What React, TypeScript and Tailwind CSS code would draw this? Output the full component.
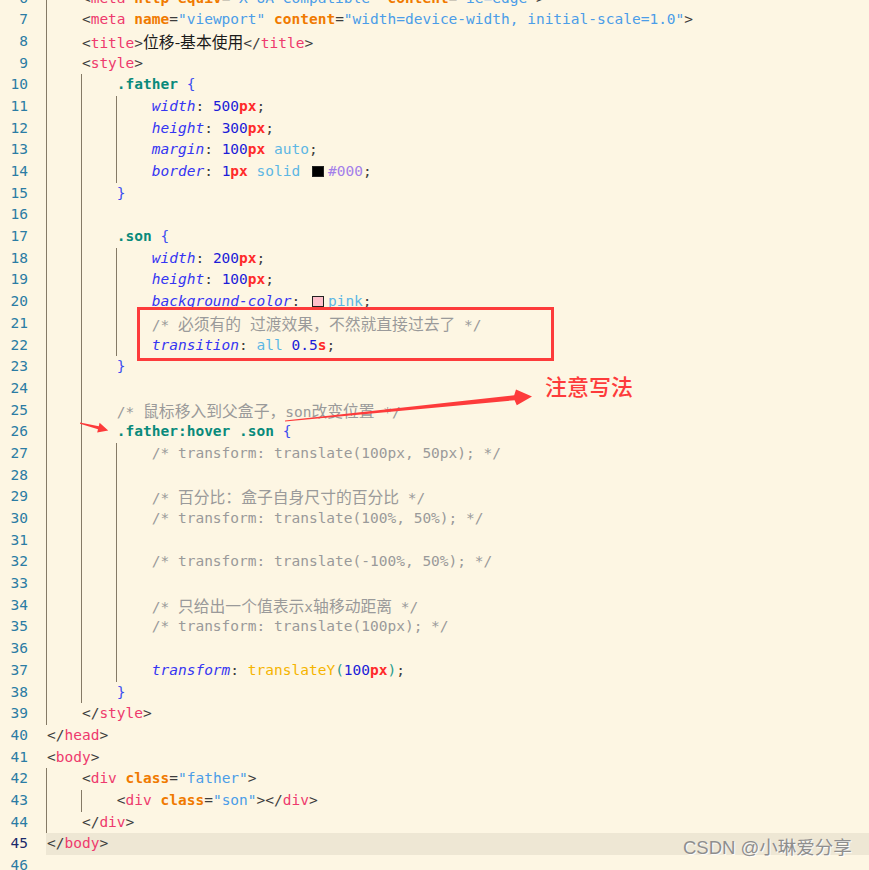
import React from "react";

type Tok = [string, string];

// token colours, roughly the HBuilderX "green" theme
const C: Record<string, string> = {
  p: "text-[#3d3d3d]",
  t: "text-[#ee3a6d]",
  a: "text-[#f07a00] font-bold",
  s: "text-[#4b9de8]",
  x: "text-[#1a1a1a] font-['Noto_Sans_CJK_SC',sans-serif] text-[15.8px]",
  sel: "text-[#098a7b] font-bold",
  b: "text-[#3d4ff0]",
  pr: "text-[#3535f2] italic",
  n: "text-[#1c1cd8]",
  u: "text-[#ff2b2b] font-bold",
  k: "text-[#5db7e4]",
  h: "text-[#a47fea]",
  c: "text-[#9a9a9a]",
  f: "text-[#f5b400]",
  pa: "text-[#2a9d8f]",
};

const I4 = "    ";
const I8 = "        ";
const I12 = "            ";

// each entry: line number, indent guide columns, tokens
const lines: { no: number; guides: number[]; toks: Tok[] }[] = [
  { no: 6, guides: [0], toks: [["p", I4 + "<"], ["t", "meta"], ["p", " "], ["a", "http-equiv"], ["p", "="], ["s", '"X-UA-Compatible"'], ["p", " "], ["a", "content"], ["p", "="], ["s", '"ie=edge"'], ["p", ">"]] },
  { no: 7, guides: [0], toks: [["p", I4 + "<"], ["t", "meta"], ["p", " "], ["a", "name"], ["p", "="], ["s", '"viewport"'], ["p", " "], ["a", "content"], ["p", "="], ["s", '"width=device-width, initial-scale=1.0"'], ["p", ">"]] },
  { no: 8, guides: [0], toks: [["p", I4 + "<"], ["t", "title"], ["p", ">"], ["x", "位移-基本使用"], ["p", "</"], ["t", "title"], ["p", ">"]] },
  { no: 9, guides: [0], toks: [["p", I4 + "<"], ["t", "style"], ["p", ">"]] },
  { no: 10, guides: [0, 4], toks: [["p", I8], ["sel", ".father"], ["p", " "], ["b", "{"]] },
  { no: 11, guides: [0, 4, 8], toks: [["p", I12], ["pr", "width"], ["p", ": "], ["n", "500"], ["u", "px"], ["p", ";"]] },
  { no: 12, guides: [0, 4, 8], toks: [["p", I12], ["pr", "height"], ["p", ": "], ["n", "300"], ["u", "px"], ["p", ";"]] },
  { no: 13, guides: [0, 4, 8], toks: [["p", I12], ["pr", "margin"], ["p", ": "], ["n", "100"], ["u", "px"], ["p", " "], ["k", "auto"], ["p", ";"]] },
  { no: 14, guides: [0, 4, 8], toks: [["p", I12], ["pr", "border"], ["p", ": "], ["n", "1"], ["u", "px"], ["p", " "], ["k", "solid"], ["p", " "], ["sw", "#000"], ["h", "#000"], ["p", ";"]] },
  { no: 15, guides: [0, 4], toks: [["p", I8], ["b", "}"]] },
  { no: 16, guides: [0, 4], toks: [] },
  { no: 17, guides: [0, 4], toks: [["p", I8], ["sel", ".son"], ["p", " "], ["b", "{"]] },
  { no: 18, guides: [0, 4, 8], toks: [["p", I12], ["pr", "width"], ["p", ": "], ["n", "200"], ["u", "px"], ["p", ";"]] },
  { no: 19, guides: [0, 4, 8], toks: [["p", I12], ["pr", "height"], ["p", ": "], ["n", "100"], ["u", "px"], ["p", ";"]] },
  { no: 20, guides: [0, 4, 8], toks: [["p", I12], ["pr", "background-color"], ["p", ": "], ["sw", "#ffc0cb"], ["k", "pink"], ["p", ";"]] },
  { no: 21, guides: [0, 4, 8], toks: [["p", I12], ["c", "/* 必须有的 过渡效果，不然就直接过去了 */"]] },
  { no: 22, guides: [0, 4, 8], toks: [["p", I12], ["pr", "transition"], ["p", ": "], ["k", "all"], ["p", " "], ["n", "0.5"], ["u", "s"], ["p", ";"]] },
  { no: 23, guides: [0, 4], toks: [["p", I8], ["b", "}"]] },
  { no: 24, guides: [0, 4], toks: [] },
  { no: 25, guides: [0, 4], toks: [["p", I8], ["c", "/* 鼠标移入到父盒子，son改变位置 */"]] },
  { no: 26, guides: [0, 4], toks: [["p", I8], ["sel", ".father:hover .son"], ["p", " "], ["b", "{"]] },
  { no: 27, guides: [0, 4, 8], toks: [["p", I12], ["c", "/* transform: translate(100px, 50px); */"]] },
  { no: 28, guides: [0, 4, 8], toks: [] },
  { no: 29, guides: [0, 4, 8], toks: [["p", I12], ["c", "/* 百分比：盒子自身尺寸的百分比 */"]] },
  { no: 30, guides: [0, 4, 8], toks: [["p", I12], ["c", "/* transform: translate(100%, 50%); */"]] },
  { no: 31, guides: [0, 4, 8], toks: [] },
  { no: 32, guides: [0, 4, 8], toks: [["p", I12], ["c", "/* transform: translate(-100%, 50%); */"]] },
  { no: 33, guides: [0, 4, 8], toks: [] },
  { no: 34, guides: [0, 4, 8], toks: [["p", I12], ["c", "/* 只给出一个值表示x轴移动距离 */"]] },
  { no: 35, guides: [0, 4, 8], toks: [["p", I12], ["c", "/* transform: translate(100px); */"]] },
  { no: 36, guides: [0, 4, 8], toks: [] },
  { no: 37, guides: [0, 4, 8], toks: [["p", I12], ["pr", "transform"], ["p", ": "], ["f", "translateY"], ["pa", "("], ["n", "100"], ["u", "px"], ["pa", ")"], ["p", ";"]] },
  { no: 38, guides: [0, 4], toks: [["p", I8], ["b", "}"]] },
  { no: 39, guides: [0], toks: [["p", I4 + "</"], ["t", "style"], ["p", ">"]] },
  { no: 40, guides: [], toks: [["p", "</"], ["t", "head"], ["p", ">"]] },
  { no: 41, guides: [], toks: [["p", "<"], ["t", "body"], ["p", ">"]] },
  { no: 42, guides: [0], toks: [["p", I4 + "<"], ["t", "div"], ["p", " "], ["a", "class"], ["p", "="], ["s", '"father"'], ["p", ">"]] },
  { no: 43, guides: [0, 4], toks: [["p", I8 + "<"], ["t", "div"], ["p", " "], ["a", "class"], ["p", "="], ["s", '"son"'], ["p", "></"], ["t", "div"], ["p", ">"]] },
  { no: 44, guides: [0], toks: [["p", I4 + "</"], ["t", "div"], ["p", ">"]] },
  { no: 45, guides: [], toks: [["p", "</"], ["t", "body"], ["p", ">"]] },
  { no: 46, guides: [], toks: [] },
];

const guideLeft: Record<number, string> = {
  0: "left-0",
  4: "left-[35px]",
  8: "left-[70px]",
};

// CJK runs come out wider than the mono cells in the editor
const renderText = (text: string) =>
  text.split(/([\u3000-\u9fff\uff00-\uffef]+)/).map((part, i) =>
    /[\u3000-\u9fff\uff00-\uffef]/.test(part) ? (
      <span key={i} className="font-['Noto_Sans_CJK_SC',sans-serif] text-[15.8px]">
        {part}
      </span>
    ) : (
      part
    )
  );

const Token = ({ tok }: { tok: Tok }) => {
  const [type, text] = tok;
  if (type === "sw") {
    return (
      <span
        className={`inline-block w-[12px] h-[11px] ml-[3px] mr-[4px] align-[-1px] border border-[#222] ${
          text === "#000" ? "bg-black" : "bg-[#ffc0cb]"
        }`}
      />
    );
  }
  if (type === "x") return <span className={C.x}>{text}</span>;
  return <span className={C[type]}>{renderText(text)}</span>;
};

export default function App() {
  return (
    <div className="relative w-[869px] h-[870px] overflow-hidden bg-[#fdf6e3] font-['DejaVu_Sans_Mono',monospace] text-[14.5px]">
      {/* editor lines */}
      <div className="-mt-[12.5px]">
        {lines.map((line) => {
          const active = line.no === 45;
          return (
            <div key={line.no} className="flex h-[21.7px] leading-[21.7px]">
              <div
                className={`w-[46px] shrink-0 pr-[18px] text-right ${
                  active ? "text-[#1b2a6b]" : "text-[#2b7ca4]"
                }`}
              >
                {line.no}
              </div>
              <div className={`relative flex-1 pl-[1px] whitespace-pre ${active ? "bg-[#eee7d4]" : ""}`}>
                {line.guides.map((g) => (
                  <div key={g} className={`absolute top-0 bottom-0 w-px bg-[#857a66] ${guideLeft[g]}`} />
                ))}
                {line.toks.map((tok, i) => (
                  <Token key={i} tok={tok} />
                ))}
              </div>
            </div>
          );
        })}
      </div>

      {/* annotation: red box around the transition lines */}
      <div className="absolute left-[137px] top-[307px] w-[417px] h-[54px] border-[3px] border-[#fd3b3b]" />

      {/* annotation arrows */}
      <svg className="absolute inset-0 pointer-events-none" width="869" height="870" viewBox="0 0 869 870">
        <polygon
          points="285,420.6 514.2,395.2 516,389.5 532,396.5 516.8,405.3 514.6,400.2 285,421.6"
          fill="#fd3b3b"
        />
        <polygon
          points="80,422.6 98.8,426.2 99.6,422.8 108.2,430.6 97.2,432.6 98,429.2 80,423.8"
          fill="#fd3b3b"
        />
      </svg>

      <div className="absolute left-[545px] top-[374px] text-[22px] leading-none font-medium text-[#fd3b3b] font-['Noto_Sans_CJK_SC',sans-serif]">
        注意写法
      </div>

      {/* watermark */}
      <div className="absolute left-[683px] top-[839px] text-[18.5px] leading-none text-[#8e8e8e] font-['Liberation_Sans','Noto_Sans_CJK_SC',sans-serif] [text-shadow:1px_1px_1px_#ffffff]">
        CSDN @小琳爱分享
      </div>
    </div>
  );
}
